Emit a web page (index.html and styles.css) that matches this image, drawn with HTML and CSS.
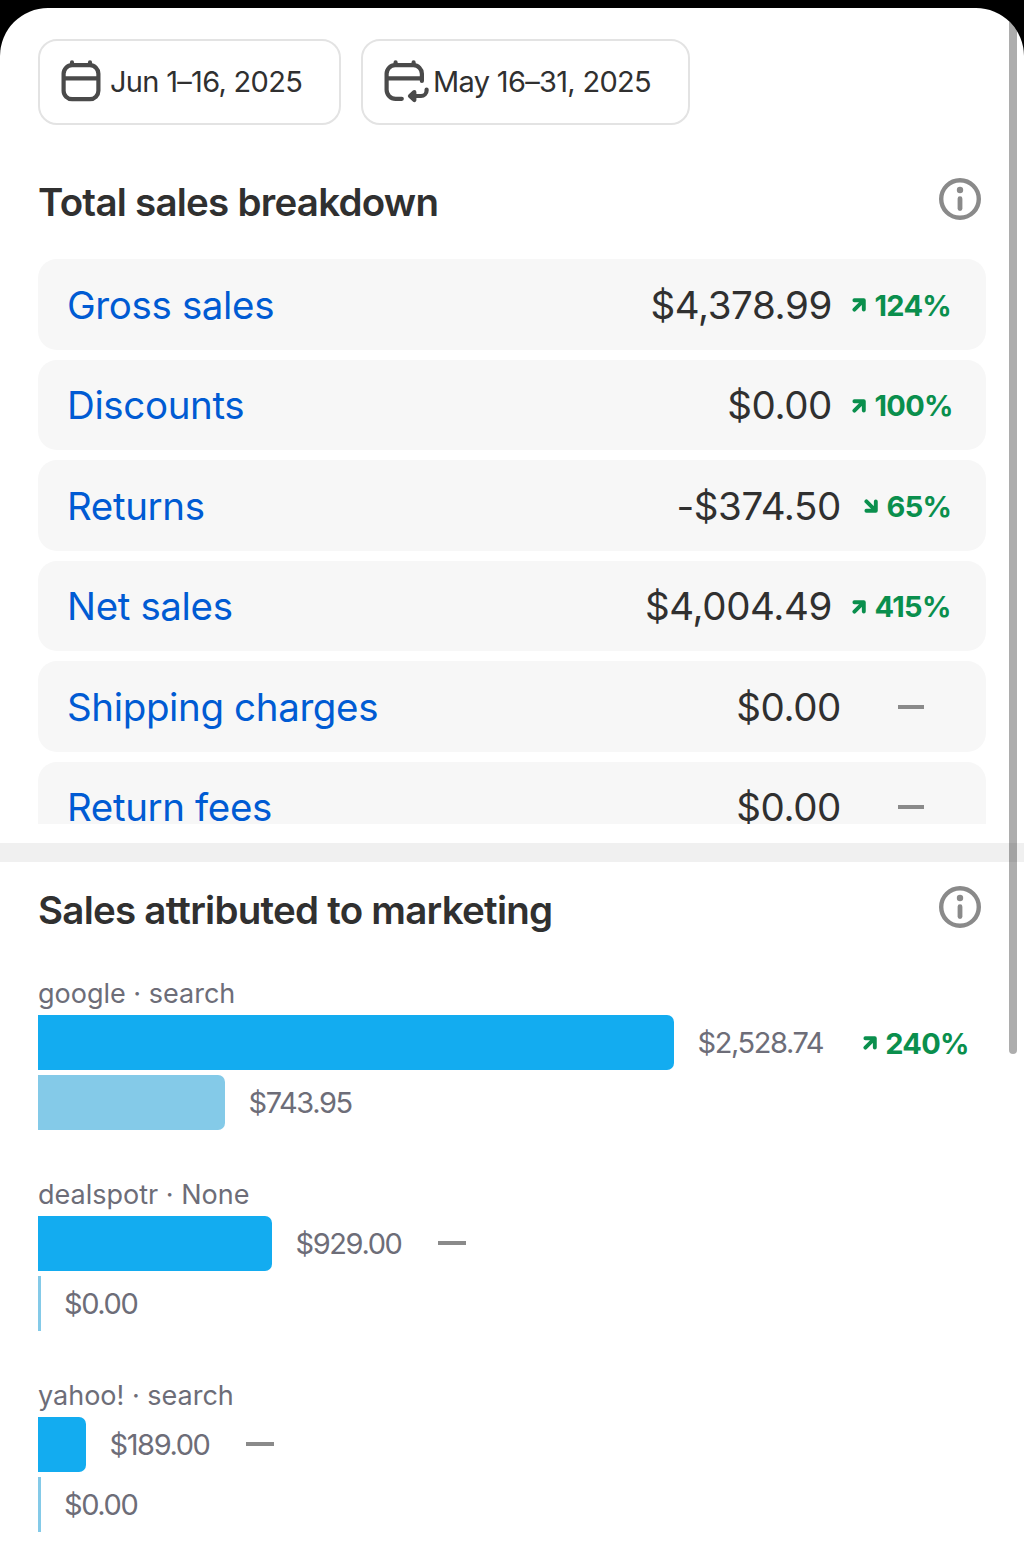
FILE: index.html
```html
<!DOCTYPE html>
<html lang="en">
<head>
    <meta charset="UTF-8">
    <meta name="viewport" content="width=device-width, initial-scale=1.0">
    <title>Analytics</title>
    <link rel="stylesheet" href="styles.css">
</head>
<body>

<!-- shared icons -->
<svg class="sprite">
    <symbol id="info" viewBox="0 0 42 42">
        <circle cx="21" cy="21" r="18.8" fill="none" stroke="currentColor" stroke-width="4.4"/>
        <circle cx="21" cy="12" r="3.2" fill="currentColor"/>
        <path d="M21 20.7v9.8" fill="none" stroke="currentColor" stroke-width="4.8" stroke-linecap="round"/>
    </symbol>
    <symbol id="up" viewBox="0 0 14 14">
        <path d="M2.4 2.2h9.4v9.4M11.4 2.6L2.4 11.6" fill="none" stroke="currentColor" stroke-width="3.9" stroke-linecap="round" stroke-linejoin="round"/>
    </symbol>
    <symbol id="down" viewBox="0 0 14 14">
        <path d="M2.4 11.8h9.4V2.4M11.4 11.4L2.4 2.4" fill="none" stroke="currentColor" stroke-width="3.9" stroke-linecap="round" stroke-linejoin="round"/>
    </symbol>
</svg>

<div class="panel">
    <section class="breakdown">
        <div class="dates">
            <button class="date">
                <svg class="calendar" viewBox="0 0 46 44" fill="none" stroke="currentColor" stroke-width="4.2" stroke-linecap="round">
                    <rect x="2.6" y="5.2" width="34.8" height="34" rx="8.5"/>
                    <path d="M3 18.4h34M11 2.4v2M29 2.4v2"/>
                </svg>
                <span class="date-text">Jun 1–16, 2025</span>
            </button>
            <button class="date">
                <svg class="calendar" viewBox="0 0 46 44" fill="none" stroke="currentColor" stroke-width="4.2" stroke-linecap="round" stroke-linejoin="round">
                    <path d="M17.8 38.8H11.6a9 9 0 0 1-9-9V13.7a8.5 8.5 0 0 1 8.5-8.5h18.3a8.5 8.5 0 0 1 8.5 8.5v7.2"/>
                    <path d="M3 18.4h34M11.6 2.4v2M29.6 2.4v2"/>
                    <path d="M42.6 29.6v.8a5.6 5.6 0 0 1-5.6 5.6h-9"/>
                    <path d="M30.3 32L26 36l4.3 4z" fill="currentColor"/>
                </svg>
                <span class="date-text">May 16–31, 2025</span>
            </button>
        </div>

        <div class="heading">
            <h2>Total sales breakdown</h2>
            <svg class="info"><use href="#info"/></svg>
        </div>

        <div class="rows">
            <div class="row">
                <a class="name">Gross sales</a>
                <span class="value">$4,378.99</span>
                <span class="change"><svg class="arrow"><use href="#up"/></svg>124%</span>
            </div>
            <div class="row">
                <a class="name">Discounts</a>
                <span class="value">$0.00</span>
                <span class="change"><svg class="arrow"><use href="#up"/></svg>100%</span>
            </div>
            <div class="row">
                <a class="name">Returns</a>
                <span class="value">-$374.50</span>
                <span class="change short"><svg class="arrow"><use href="#down"/></svg>65%</span>
            </div>
            <div class="row">
                <a class="name">Net sales</a>
                <span class="value">$4,004.49</span>
                <span class="change"><svg class="arrow"><use href="#up"/></svg>415%</span>
            </div>
            <div class="row">
                <a class="name">Shipping charges</a>
                <span class="value">$0.00</span>
                <span class="change none"><i class="dash"></i></span>
            </div>
            <div class="row">
                <a class="name">Return fees</a>
                <span class="value">$0.00</span>
                <span class="change none"><i class="dash"></i></span>
            </div>
        </div>
    </section>

    <section class="marketing">
        <div class="heading">
            <h2>Sales attributed to marketing</h2>
            <svg class="info"><use href="#info"/></svg>
        </div>

        <div class="group">
            <div class="label">google · search</div>
            <div class="bar-row">
                <div class="bar" style="width: 636px"></div>
                <span class="amount">$2,528.74</span>
                <span class="growth"><svg class="arrow"><use href="#up"/></svg>240%</span>
            </div>
            <div class="bar-row">
                <div class="bar previous" style="width: 187px"></div>
                <span class="amount">$743.95</span>
            </div>
        </div>

        <div class="group">
            <div class="label">dealspotr · None</div>
            <div class="bar-row">
                <div class="bar" style="width: 234px"></div>
                <span class="amount">$929.00</span>
                <i class="dash wide"></i>
            </div>
            <div class="bar-row">
                <div class="bar previous empty"></div>
                <span class="amount">$0.00</span>
            </div>
        </div>

        <div class="group">
            <div class="label">yahoo! · search</div>
            <div class="bar-row">
                <div class="bar" style="width: 48px"></div>
                <span class="amount">$189.00</span>
                <i class="dash wide"></i>
            </div>
            <div class="bar-row">
                <div class="bar previous empty"></div>
                <span class="amount">$0.00</span>
            </div>
        </div>
    </section>

    <div class="scrollbar"></div>
</div>

</body>
</html>
```
FILE: styles.css
```css
* {
    box-sizing: border-box;
}
body {
    margin: 0;
    background: #000;
    color: #303030;
    font-family: Inter, "Liberation Sans", sans-serif;
    padding-top: 8px;
    height: 1548px;
    overflow: hidden;
}
.sprite {
    display: none;
}
.panel {
    position: relative;
    height: 1540px;
    background: #fff;
    border-radius: 48px 48px 0 0;
    overflow: hidden;
}
.breakdown {
    height: 854px;
    padding: 31px 38px 0;
    border-bottom: 19px solid #f0f0f0;
}
.dates {
    display: flex;
    gap: 20px;
}
.date {
    display: flex;
    align-items: center;
    height: 86px;
    padding: 0 37px 0 21px;
    background: #fff;
    border: 2.5px solid #e3e3e3;
    border-radius: 19px;
    color: #4a4a4a;
    font-family: inherit;
}
.calendar {
    width: 46px;
    height: 44px;
    margin-right: 3px;
}
.date-text {
    padding-bottom: 2px;
    color: #303030;
    font-size: 29px;
    letter-spacing: -0.7px;
    white-space: nowrap;
}
.heading {
    display: flex;
    align-items: center;
    justify-content: space-between;
    height: 48px;
    margin-top: 53px;
}
h2 {
    margin: 0;
    font-size: 38.5px;
    font-weight: 600;
    line-height: 48px;
    letter-spacing: -0.75px;
    white-space: nowrap;
}
.info {
    width: 42px;
    height: 42px;
    margin: 0 5.5px 6px 0;
    color: #8a8a8a;
}
.rows {
    display: flex;
    flex-direction: column;
    gap: 10px;
    height: 564.5px;
    margin-top: 33px;
    overflow: hidden;
}
.row {
    display: flex;
    align-items: center;
    flex: 0 0 90.5px;
    padding: 1px 35px 0 29px;
    background: #f7f7f7;
    border-radius: 19px;
    font-size: 38.5px;
    letter-spacing: -0.37px;
}
.name {
    flex: 1;
    color: #005bd3;
}
.change {
    display: flex;
    align-items: center;
    width: 99px;
    margin-left: 20px;
    padding-top: 1px;
    color: #0a8f4d;
    font-size: 29px;
    font-weight: 650;
    letter-spacing: -0.7px;
}
.change.short {
    width: 87px;
    margin-left: 23px;
}
.change.none {
    justify-content: center;
    width: 80px;
    margin-left: 30px;
    padding-top: 0;
}
.arrow {
    flex: none;
    width: 14px;
    height: 14px;
    margin-right: 8.5px;
}
.dash {
    width: 26px;
    height: 4px;
    background: #8a8a8a;
}
.marketing {
    padding: 0 38px;
}
.marketing .heading {
    height: 72px;
    margin: 0 0 43.5px;
    padding-top: 24px;
}
.group {
    display: flex;
    flex-direction: column;
    gap: 5px;
    height: 201px;
}
.label {
    height: 32px;
    color: #6d6d78;
    font-size: 27px;
    line-height: 32px;
}
.bar-row {
    display: flex;
    align-items: center;
    height: 55px;
    color: #6d6d78;
    font-size: 29px;
}
.bar {
    height: 55px;
    background: #13acf0;
    border-radius: 0 7px 7px 0;
}
.bar.previous {
    background: #84cae8;
}
.bar.empty {
    width: 2.5px;
    border-radius: 0;
}
.amount {
    margin-left: 23.5px;
    letter-spacing: -1.4px;
}
.growth {
    display: flex;
    align-items: center;
    margin-left: 39.5px;
    padding-top: 2px;
    color: #0a8f4d;
    font-size: 29px;
    font-weight: 650;
    letter-spacing: -0.7px;
}
.dash.wide {
    width: 28px;
    margin-left: 36.5px;
}
/* overlay scroll indicator */
.scrollbar {
    position: absolute;
    top: -20px;
    right: 7px;
    width: 8px;
    height: 1066px;
    background: rgba(0, 0, 0, 0.32);
    border-radius: 4px;
}
```
